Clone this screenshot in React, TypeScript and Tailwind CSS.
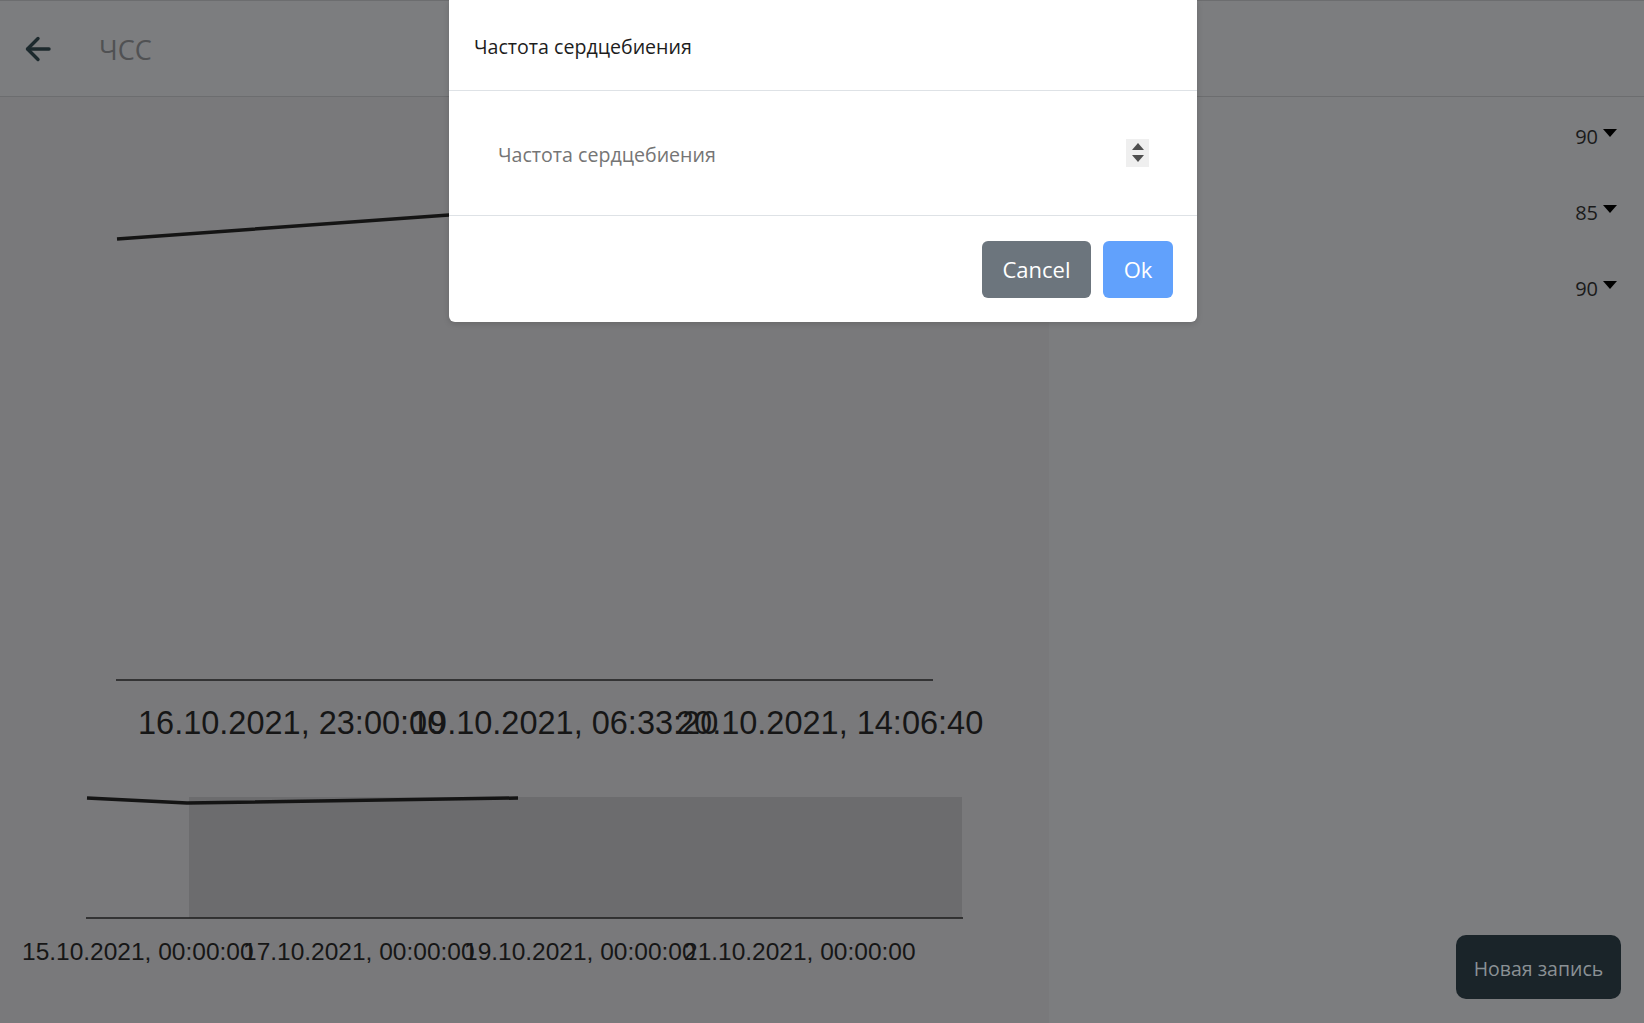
import React from "react"

const records = [
  { id: 1, value: 90 },
  { id: 2, value: 85 },
  { id: 3, value: 90 },
]

const mainTicks = [
  { x: 138, label: "16.10.2021, 23:00:00" },
  { x: 411, label: "19.10.2021, 06:33:20" },
  { x: 676, label: "20.10.2021, 14:06:40" },
]

const brushTicks = [
  { x: 22, label: "15.10.2021, 00:00:00" },
  { x: 243, label: "17.10.2021, 00:00:00" },
  { x: 464, label: "19.10.2021, 00:00:00" },
  { x: 684, label: "21.10.2021, 00:00:00" },
]

function BackArrow() {
  return (
    <svg width="26" height="26" viewBox="0 0 26 26" fill="none" stroke="#1c292d" strokeWidth="3.4" strokeLinecap="round" strokeLinejoin="round">
      <path d="M24 13H3" />
      <path d="M13 2.5 2.5 13 13 23.5" />
    </svg>
  )
}

function Chart() {
  return (
    <svg width="1049" height="926" viewBox="0 0 1049 926" className="block" style={{ fontFamily: '"Liberation Sans", Arial, sans-serif' }}>
      {/* main line */}
      <polyline points="117,142 449,118 700,112 930,106" fill="none" stroke="#141414" strokeWidth="3.5" strokeLinejoin="round" />
      <line x1="116" y1="583" x2="933" y2="583" stroke="#1c1c1c" strokeWidth="1.5" />
      {mainTicks.map((t) => (
        <text key={t.label} x={t.x} y="637" fontSize="32.5" fill="#161616">
          {t.label}
        </text>
      ))}

      {/* brush */}
      <rect x="189" y="700" width="773" height="121" fill="#6c6c6e" />
      <polyline points="87,701 187,706 518,701" fill="none" stroke="#141414" strokeWidth="3.5" strokeLinejoin="round" />
      <line x1="86" y1="821" x2="963" y2="821" stroke="#1c1c1c" strokeWidth="1.5" />
      {brushTicks.map((t) => (
        <text key={t.label} x={t.x} y="863" fontSize="24.5" fill="#161616">
          {t.label}
        </text>
      ))}
    </svg>
  )
}

export default function App() {
  return (
    <div className="relative h-screen w-full overflow-hidden bg-[#7c7d7f] flex flex-col" style={{ fontFamily: '"Open Sans", "Noto Sans", sans-serif' }}>
      {/* Header */}
      <header className="h-[97px] shrink-0 border-t border-b border-[#6c6d6f] flex items-center">
        <button className="ml-[24px] w-[28px] h-[28px] flex items-center justify-center">
          <BackArrow />
        </button>
        <h1 className="ml-[47px] text-[27px] text-[#505153] leading-none pt-[1px]">ЧСС</h1>
      </header>

      {/* Content */}
      <div className="flex flex-1 min-h-0">
        <section className="w-[1049px] shrink-0 bg-[#79797b]">
          <Chart />
        </section>

        <aside className="flex-1 flex flex-col pt-[2px] pb-[24px] pr-[23px]">
          {records.map((r) => (
            <div key={r.id} className="h-[76px] flex items-center justify-end pr-[4px]">
              <span className="text-[20px] leading-none text-[#1a1a1a]">{r.value}</span>
              <span className="ml-[5px] mb-[8px] w-0 h-0 border-t-[8px] border-t-black border-x-[7px] border-x-transparent" />
            </div>
          ))}
          <button className="mt-auto self-end w-[165px] h-[64px] pt-[3px] rounded-[10px] bg-[#1a2429] text-[19.5px] text-[#8a9195]">
            Новая запись
          </button>
        </aside>
      </div>

      {/* Modal */}
      <div className="absolute top-0 left-[449px] w-[748px] bg-white rounded-b-[6px] shadow-[0_2px_6px_rgba(0,0,0,0.15)]">
        <div className="h-[91px] px-[25px] flex items-center border-b border-[#dee2e6]">
          <h2 className="text-[19.6px] text-[#1d1d1d] pt-[4px]">Частота сердцебиения</h2>
        </div>
        <div className="h-[125px] px-[24px] flex items-center border-b border-[#dee2e6]">
          <div className="flex-1 flex items-center px-[25px] pr-[24px]">
            <input
              type="text"
              placeholder="Частота сердцебиения"
              className="flex-1 bg-transparent outline-none text-[19.6px] text-[#212529] placeholder:text-[#757575] pt-[4px]"
            />
            <div className="w-[23px] h-[28px] bg-[#efefef] flex flex-col items-center justify-center gap-[5px]">
              <span className="w-0 h-0 border-b-[7px] border-b-[#4f4f4f] border-x-[6px] border-x-transparent" />
              <span className="w-0 h-0 border-t-[7px] border-t-[#4f4f4f] border-x-[6px] border-x-transparent" />
            </div>
          </div>
        </div>
        <div className="flex justify-end gap-[12px] pt-[25px] pb-[24px] pr-[24px]">
          <button className="h-[57px] w-[109px] rounded-[6px] bg-[#6c757d] text-white text-[22px]">Cancel</button>
          <button className="h-[57px] w-[70px] rounded-[6px] bg-[#61a1fc] text-white text-[22px]">Ok</button>
        </div>
      </div>
    </div>
  )
}
